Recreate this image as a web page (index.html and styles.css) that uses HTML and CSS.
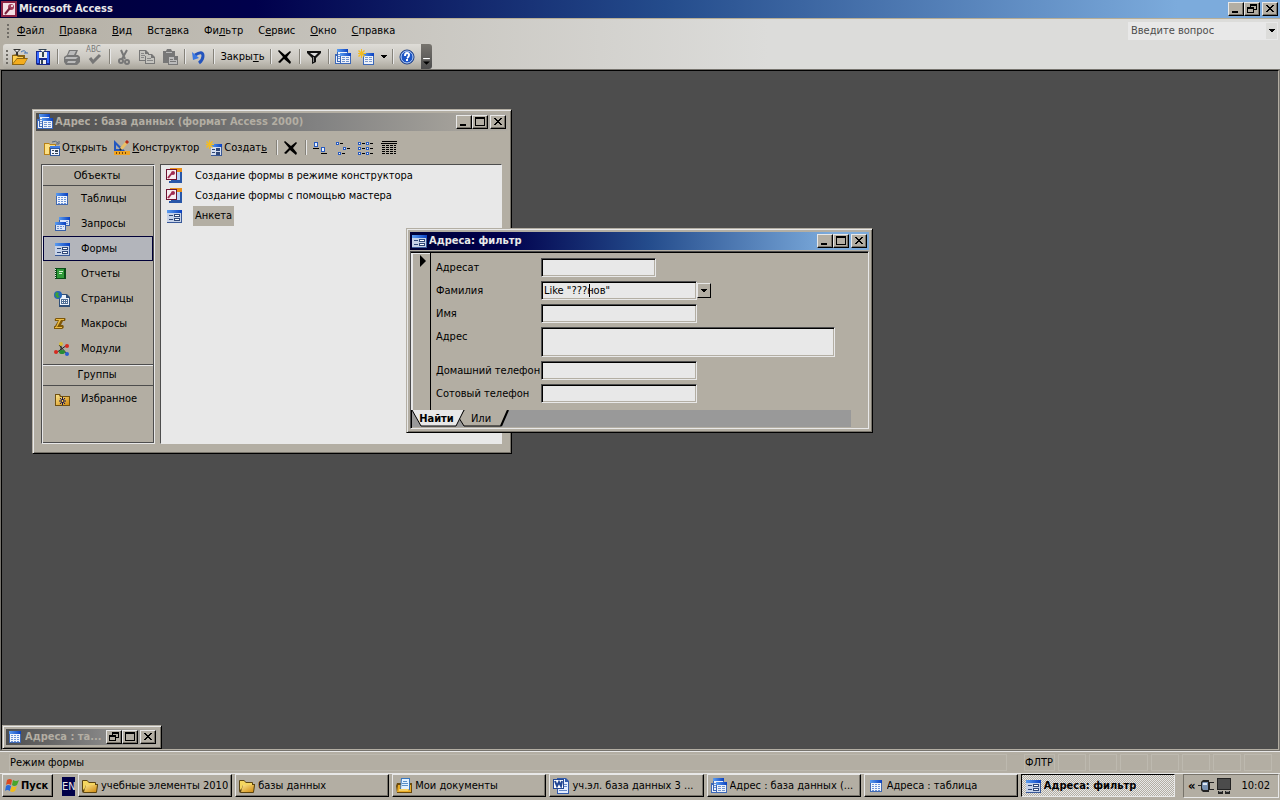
FILE: index.html
```html
<!DOCTYPE html>
<html lang="ru">
<head>
<meta charset="utf-8">
<title>Microsoft Access</title>
<link rel="stylesheet" href="styles.css">
</head>
<body>
<svg class="defs" aria-hidden="true">
  <defs>
    <linearGradient id="blue" x1="0" y1="0" x2="1" y2="0"><stop offset="0" stop-color="#5a9cf0"/><stop offset="1" stop-color="#0a40c0"/></linearGradient>
    <linearGradient id="gold" x1="0" y1="0" x2="1" y2="1"><stop offset="0" stop-color="#fbe48a"/><stop offset="1" stop-color="#d08a10"/></linearGradient>
    <symbol id="table" viewBox="0 0 16 16"><path fill="#4068b0" d="M2 2h12v12H2z"/><path fill="url(#blue)" d="M2 2h12v3H2z"/><path fill="#f0f4fc" d="M3 5h10v8H3z"/><path fill="#6c94d8" d="M4 6h2v1H4zm3 0h2v1H7zm3 0h2v1h-2zM4 8h2v1H4zm3 0h2v1H7zm3 0h2v1h-2zM4 10h2v1H4zm3 0h2v1H7zm3 0h2v1h-2zM4 12h2v1H4zm3 0h2v1H7zm3 0h2v1h-2z"/></symbol>
    <symbol id="form" viewBox="0 0 16 16"><path fill="#385898" d="M1 2h15v13H1z"/><path fill="url(#blue)" d="M1 2h15v3H1z"/><path fill="#c6d2e8" d="M1 5h14v9H1z"/><path fill="#304878" d="M3 7h4v1H3zm0 4h4v1H3zM8 6h6v3H8zm0 4h6v3H8z"/><path fill="#fff" d="M9 7h4v1H9zm0 4h4v1H9z"/></symbol>
    <symbol id="query" viewBox="0 0 16 16"><path fill="#3860a8" d="M5 1h11v9H5z"/><path fill="url(#blue)" d="M5 1h11v3H5z"/><path fill="#dce6f8" d="M6 4h9v5H6z"/><path fill="#7090c8" d="M12 5h2v1h-2zm0 2h2v1h-2z"/><path fill="#3860a8" d="M1 6h11v9H1z"/><path fill="url(#blue)" d="M1 6h11v3H1z"/><path fill="#dce6f8" d="M2 9h9v5H2z"/><path fill="#7090c8" d="M3 10h2v1H3zm3 0h2v1H6zm3 0h1v1H9zm-6 2h2v1H3zm3 0h2v1H6z"/></symbol>
    <symbol id="database" viewBox="0 0 16 16"><path fill="#3c68b8" d="M0 5h8v10H0z"/><path fill="#eef2fa" d="M1 7h6v7H1z"/><path fill="#3c68b8" d="M2 0h11v13H2z"/><path fill="url(#blue)" d="M2 0h11v3H2z"/><path fill="#eef2fa" d="M3 3h9v9H3z"/><path fill="#6f92ce" d="M3 5h2v1H3zm0 2h2v1H3zm0 2h2v1H3z"/><path fill="#3c68b8" d="M5 4h11v11H5z"/><path fill="url(#blue)" d="M5 4h11v3H5z"/><path fill="#eef2fa" d="M6 7h9v7H6z"/><path fill="#6f92ce" d="M7 8h3v1H7zm4 0h3v1h-3zm-4 2h3v1H7zm4 0h3v1h-3zm-4 2h3v1H7zm4 0h3v1h-3z"/></symbol>
    <symbol id="delete" viewBox="0 0 16 16"><path d="M2 1l6 5 5-4 1 1-4 5 4 5-1 2-6-5-4 4-2-1 5-5-5-6z"/></symbol>
    <symbol id="folder" viewBox="0 0 16 16"><path fill="#5c4510" d="M0 3q0-1 1-1h4l2 2h6q1 0 1 1v1h2v2l-1 6q0 1-1 1H2q-2 0-2-2z"/><path fill="#f5d660" d="M1 3h4l2 2h6v2H4L2 12 1 11z"/><path fill="url(#gold)" d="M4 7h11l-1 7H2z"/></symbol>
    <symbol id="openfilter" viewBox="0 0 16 16"><path fill="#8a6414" d="M0 6l5-1 2 1h6v3h3l-4 7H0z"/><path fill="#ffd050" d="M1 7h4l1 1h5v1H5l-4 5z"/><path fill="#f4ad1e" d="M5 10h10l-3 5H1z"/><path fill="#333" d="M1 0h8L6 3v4L4 6V3z"/><path fill="#eee" d="M3 1h4L5 3z"/><path fill="none" stroke="#4775b5" d="M9 3q4-3 5 1m-2 0h4"/></symbol>
    <symbol id="save" viewBox="0 0 16 16"><path fill="#172890" d="M1 2h14v14H2l-1-1z"/><path fill="#376aff" d="M2 3h2v11H2zm10 0h2v11h-2z"/><path fill="#eee" d="M4 3h8v6H4zm1 8h6v4H5z"/><path fill="#345" d="M6 11h2v4H6zM3 0h9L9 3v5H7V3z"/><path fill="#fff" d="M5 1h5L8 3z"/></symbol>
    <symbol id="print" viewBox="0 0 16 16"><path fill="#777" d="M5 1h9l-2 5h2l2 2v5l-3 3H2l-2-3V8l3-2z"/><path fill="#bbb" d="M6 2h6l-2 4H4zM2 8h12l-2 2H1zm2 4h8l-1 2H3z"/></symbol>
    <symbol id="check" viewBox="0 0 16 16"><path fill="none" stroke="#777" stroke-width="3" d="M3 9l3 4 7-7"/></symbol>
    <symbol id="cut" viewBox="0 0 16 16"><path fill="none" stroke="#777" stroke-width="2" d="M5 1l4 9M11 1L6 10"/><circle cx="5" cy="12" r="2" fill="none" stroke="#777" stroke-width="2"/><circle cx="11" cy="13" r="2" fill="none" stroke="#777" stroke-width="2"/></symbol>
    <symbol id="copy" viewBox="0 0 16 16"><path fill="#777" d="M0 1h7l3 3v8H0zm6 4h7l3 3v7H6z"/><path fill="#c5c4bf" d="M1 2h5v3h3v2H6v4H1zm6 4h5v3h3v5H7z"/><path stroke="#888" d="M2 4.500h3M2 6.500h4M2 8.500h3M8 9.500h4M8 11.500h6"/></symbol>
    <symbol id="paste" viewBox="0 0 16 16"><path fill="#777" d="M1 2h3l1-2h4l1 2h3v5h3v9H6v-2H1z"/><path fill="#bbb" d="M4 3h6v1H4zm3 5h5v3h3v4H7z"/><path stroke="#777" d="M8 10.500h3M8 12.500h6"/></symbol>
    <symbol id="undo" viewBox="0 0 16 16"><path fill="none" stroke="#2454bd" stroke-width="3" d="M4 6q8-5 8 1 0 4-4 7"/><path fill="#3977e2" d="M1 3l1 8 6-2z"/></symbol>
    <symbol id="filter" viewBox="0 0 16 16"><path fill="#111" d="M1 2h14v2l-5 5v4l-4 2V9L1 4z"/><path fill="#ddd" d="M4 4h8L9 7H8z"/><path fill="#888" d="M7 8h1v5H7z"/></symbol>
    <symbol id="newobject" viewBox="0 0 16 16"><path fill="#3c68b8" d="M5 4h11v12H5z"/><path fill="url(#blue)" d="M5 4h11v3H5z"/><path fill="#eef2fa" d="M6 7h9v8H6z"/><path fill="#7898d0" d="M7 8h3v1H7zm4 0h3v1h-3zm-4 2h3v1H7zm4 0h3v1h-3zm-4 2h3v1H7zm4 0h3v1h-3z"/><path fill="#f3bc21" d="M3 0h1v3l2-2 1 1-2 2h3v1H5l2 2-1 1-2-2v3H3V6L1 8 0 7l2-2H0V4h2L0 2l1-1 2 2z"/></symbol>
    <symbol id="newform" viewBox="0 0 16 16"><path fill="#385898" d="M5 4h11v12H5z"/><path fill="url(#blue)" d="M5 4h11v3H5z"/><path fill="#d4def0" d="M5 7h10v8H5z"/><path fill="#304878" d="M6 9h3v1H6zm0 3h3v1H6zm4-4h4v3h-4zm0 4h4v3h-4z"/><path fill="#f3bc21" d="M3 0h1v3l2-2 1 1-2 2h3v1H5l2 2-1 1-2-2v3H3V6L1 8 0 7l2-2H0V4h2L0 2l1-1 2 2z"/></symbol>
    <symbol id="help" viewBox="0 0 16 16"><circle cx="8" cy="8" r="7" fill="#1d55c5" stroke="#17377d"/><circle cx="8" cy="8" r="6" fill="none" stroke="#b9d0f6"/><path fill="none" stroke="#fff" stroke-width="2" d="M6 7q0-3 2-3t2 2-2 3m0 1v2"/></symbol>
    <symbol id="access" viewBox="0 0 16 16"><path fill="#8c2344" d="M0 0h16v16H0z"/><path fill="#f3dfe5" d="M2 2h12v12H2z"/><circle cx="10" cy="6" r="3" fill="#a33c5b"/><path stroke="#79203b" stroke-width="2" d="M9 7l-5 6"/><circle cx="11" cy="5" r="1" fill="#fff"/></symbol>
    <symbol id="wizard" viewBox="0 0 16 16"><path fill="#e8901c" d="M4 0h12v4H4z"/><path fill="#2856a8" d="M5 4h11v11H3v-2h2z"/><path fill="#b9d2f4" d="M11 4h3v8h-3z"/><path fill="#6e1432" d="M0 1h11v11H0z"/><path fill="#f7eef0" d="M1 2h9v9H1z"/><path stroke="#a02c50" stroke-width="2" d="M2 10l4-5"/><circle cx="7" cy="5" r="2" fill="#a02c50"/></symbol>
    <symbol id="openform" viewBox="0 0 16 16"><path fill="#b78117" d="M0 3h5l1 1h6v4H6v7H0z"/><path fill="#fce084" d="M1 4h4l1 1h5v2H5v7H1z"/><path fill="#315899" d="M6 6h10v10H6z"/><path fill="#3f7ce4" d="M6 6h10v2H6z"/><path fill="#eef3ff" d="M7 9h8v6H7z"/><path fill="#345" d="M8 10h2v1H8zm3 0h3v2h-3zm-3 3h2v1H8zm3 0h3v1h-3z"/><path fill="none" stroke="#56677f" d="M8 2q4-2 6 1m-2 1h3V1"/></symbol>
    <symbol id="design" viewBox="0 0 16 16"><path fill="#2458c0" d="M0 0l11 11H0z"/><path fill="#b3aea3" d="M2 5l4 4H2z"/><path fill="#f0a420" d="M0 11h16v4H0z"/><path stroke="#734708" d="M2.500 12v2m3-2v2m3-2v2m3-2v2"/><path stroke="#e9bf66" stroke-width="3" d="M7 9l6-7"/><path stroke="#b32b19" stroke-width="3" d="M12 3l2-2"/><path stroke="#222" stroke-width="2" d="M6 10l1-1"/></symbol>
    <symbol id="large" viewBox="0 0 16 16"><path fill="#285bc0" d="M2 2h4v5H2zm7 5h4v5H9z"/><path fill="#eaf2ff" d="M3 3h2v3H3zm7 5h2v3h-2z"/><path d="M1 8h6v1H1zm8 5h6v1H9z"/></symbol>
    <symbol id="small" viewBox="0 0 16 16"><path fill="#285bc0" d="M1 2h3v3H1zm7 5h3v3H8zm-5 5h3v3H3z"/><path fill="#fff" d="M2 3h1v1H2zm7 5h1v1H9zm-5 5h1v1H4z"/><path d="M5 3h3v1H5zm7 5h3v1h-3zm-5 5h3v1H7z"/></symbol>
    <symbol id="list" viewBox="0 0 16 16"><path fill="#285bc0" d="M0 2h3v3H0zm0 5h3v3H0zm0 5h3v3H0zm8-10h3v3H8zm0 5h3v3H8zm0 5h3v3H8z"/><path fill="#fff" d="M1 3h1v1H1zm0 5h1v1H1zm0 5h1v1H1zm8-10h1v1H9zm0 5h1v1H9zm0 5h1v1H9z"/><path d="M4 3h3v1H4zm0 5h3v1H4zm0 5h3v1H4zm8-10h3v1h-3zm0 5h3v1h-3zm0 5h3v1h-3z"/></symbol>
    <symbol id="details" viewBox="0 0 16 16"><path d="M1 1h15v1H1zM0 3h16v1H0zm1 2h3v1H1zm4 0h3v1H5zm4 0h3v1H9zm4 0h2v1h-2zM1 7h3v1H1zm4 0h3v1H5zm4 0h3v1H9zm4 0h2v1h-2zM1 9h3v1H1zm4 0h3v1H5zm4 0h3v1H9zm4 0h2v1h-2zM1 11h3v1H1zm4 0h3v1H5zm4 0h3v1H9zm4 0h2v1h-2zM1 13h3v1H1zm4 0h3v1H5zm4 0h3v1H9zm4 0h2v1h-2z"/></symbol>
    <symbol id="report" viewBox="0 0 16 16"><path fill="#0b4d18" d="M1 2h11v11H1z"/><path fill="#319c3a" d="M3 3h7v9H3z"/><path fill="#d8f0d4" d="M5 5h4v1H5zm0 2h3v1H5z"/><path stroke="#ddd" stroke-dasharray="1 1" d="M1.500 3v9"/></symbol>
    <symbol id="page" viewBox="0 0 16 16"><path fill="#315078" d="M5 3h8l3 3v10H5z"/><path fill="#edf3fb" d="M6 4h6v3h3v7H6z"/><path fill="#517096" d="M7 8h7v5H7z"/><path fill="#fff" d="M8 9h1v1H8zm2 0h1v1h-1zm2 0h1v1h-1zm-4 2h1v1H8zm2 0h1v1h-1zm2 0h1v1h-1z"/><circle cx="4" cy="4" r="4" fill="#2565b9"/><path fill="#3b9e38" d="M2 1l3 1-1 2 2 2-3 1-2-3z"/></symbol>
    <symbol id="macro" viewBox="0 0 16 16"><path fill="#7e5709" d="M2 2q-2 1-1 3h3l-3 5q-2 0-1 3h8q3-1 1-4H7l2-4h2q1-2 0-3z"/><path fill="#eebe45" d="M2 3h8v1H7l-4 7h5v1H1v-1h1l3-7H2z"/></symbol>
    <symbol id="module" viewBox="0 0 16 16"><path stroke="#222" fill="none" d="M2 12l11-8M5 4l9 10M7 2v8"/><circle cx="7" cy="3" r="2" fill="#d8bc37"/><circle cx="13" cy="5" r="2" fill="#d62b20"/><circle cx="2" cy="11" r="2" fill="#d62b20"/><ellipse cx="8" cy="11" rx="3" ry="2" fill="#278c34"/><circle cx="13" cy="13" r="2" fill="#2a5ed0"/></symbol>
    <symbol id="favorites" viewBox="0 0 16 16"><path fill="#715010" d="M1 3h5l1 2h9v10H1z"/><path fill="url(#gold)" d="M2 4h3l1 2h9v8H2z"/><path stroke="#15154f" d="M8.500 6v8M5 10h7M6 7l5 6m0-6l-5 6"/><path fill="#ffc83c" d="M8 9h1v2H8z"/></symbol>
    <symbol id="documents" viewBox="0 0 16 16"><path fill="#6b4a0c" d="M1 5h15v10H1L0 8z"/><path fill="#e9ac26" d="M2 7h13v7H1z"/><path fill="#3977bf" d="M5 0h9v12H4z"/><path fill="#e2f1ff" d="M6 1h7v10H5z"/><path stroke="#5990c9" d="M7 3.500h4M6 5.500h6M6 7.500h6"/><path fill="#f5cf65" d="M3 11h10l-1 2H3z"/></symbol>
    <symbol id="word" viewBox="0 0 16 16"><path fill="#315aac" d="M4 0h9l3 3v13H4z"/><path fill="#e4edff" d="M5 1h7v3h3v11H5z"/><path stroke="#678ac8" d="M10 6.500h4M10 8.500h4M6 12.500h8"/><path fill="#234794" d="M0 1h11v10H0z"/><path fill="#fff" d="M1 2h9v8H1z"/><path fill="none" stroke="#234794" stroke-width="2" d="M2 3l2 5 2-4 2 4 1-5"/></symbol>
    <symbol id="windows" viewBox="0 0 16 16"><path fill="#d9471f" d="M3 2q3-2 5 0L7 7Q4 5 2 7z"/><path fill="#48a52d" d="M9 2q3 2 6 0l-2 5q-3 2-5 0z"/><path fill="#2869d8" d="M2 8q2-2 5 0l-1 5q-3-2-5 0z"/><path fill="#efbb1c" d="M8 8q2 2 5 0l-2 5q-3 2-5 0z"/></symbol>
    <symbol id="plug" viewBox="0 0 16 16"><path fill="#222" d="M0 7h3V4l2-2h6v2h5v1h-4v6h4v1h-5v2H5l-2-2V8H0z"/><path fill="#7890b0" d="M5 4h5v8H5L4 10V5z"/><path fill="#dce5f1" d="M5 5h4v2H5z"/></symbol>
    <symbol id="network" viewBox="0 0 16 16"><path fill="#222" d="M1 0h14v12H1z"/><path fill="#4b4b4b" d="M2 1h12v10H2z"/><path fill="#222" d="M2 13h5v3H2zm7 0h5v3H9z"/><path fill="#888" d="M3 13h3v1H3zm7 0h3v1h-3z"/></symbol>
    <symbol id="min" viewBox="0 0 12 10"><path d="M2 7h6v2H2z"/></symbol>
    <symbol id="max" viewBox="0 0 12 10"><path fill-rule="evenodd" d="M1 0h10v9H1zm1 2v6h8V2z"/></symbol>
    <symbol id="restore" viewBox="0 0 12 10"><path fill-rule="evenodd" d="M4 0h7v6H8v3H1V3h3zm1 2v1h3v2h2V2zM2 5v3h5V5z"/></symbol>
    <symbol id="close" viewBox="0 0 12 10"><path d="M2 1h2v1h1v1h2V2h1V1h2v1H9v1H8v1H7v1h1v1h1v1h1v1H8V7H7V6H5v1H4v1H2V7h1V6h1V5h1V4H4V3H3V2H2z"/></symbol>
    <symbol id="down" viewBox="0 0 8 8"><path d="M1 2h6v1H6v1H5v1H3V4H2V3H1z"/></symbol>
  </defs>
</svg>
<div class="app">
  <header class="title-bar app-title">
    <svg class="icon"><use href="#access"/></svg>
    <h1 class="title-text">Microsoft Access</h1>
    <div class="caption-buttons">
      <button class="cap" aria-label="Свернуть"><svg><use href="#min"/></svg></button><button class="cap" aria-label="Восстановить"><svg><use href="#restore"/></svg></button><button class="cap cap-close" aria-label="Закрыть"><svg><use href="#close"/></svg></button>
    </div>
  </header>

  <div class="bars">
    <nav class="menu-bar">
      <span class="grip"></span>
      <button class="menu"><u>Ф</u>айл</button><button class="menu"><u>П</u>равка</button><button class="menu"><u>В</u>ид</button><button class="menu">Вст<u>а</u>вка</button><button class="menu">Фи<u>л</u>ьтр</button><button class="menu">С<u>е</u>рвис</button><button class="menu"><u>О</u>кно</button><button class="menu"><u>С</u>правка</button>
      <div class="ask"><input class="ask-input" type="text" aria-label="Введите вопрос" placeholder="Введите вопрос"><button class="ask-arrow" aria-label="Список вопросов"><svg><use href="#down"/></svg></button></div>
    </nav>
    <div class="tool-row">
      <div class="toolbar">
        <span class="grip"></span>
        <button class="tool" aria-label="Загрузить фильтр"><svg class="icon"><use href="#openfilter"/></svg></button>
        <button class="tool" aria-label="Сохранить"><svg class="icon"><use href="#save"/></svg></button>
        <span class="sep"></span>
        <button class="tool" aria-label="Печать"><svg class="icon"><use href="#print"/></svg></button>
        <button class="tool spell" aria-label="Орфография"><span class="spell-text">ABC</span><svg class="icon"><use href="#check"/></svg></button>
        <span class="sep"></span>
        <button class="tool" aria-label="Вырезать"><svg class="icon"><use href="#cut"/></svg></button>
        <button class="tool" aria-label="Копировать"><svg class="icon"><use href="#copy"/></svg></button>
        <button class="tool" aria-label="Вставить"><svg class="icon"><use href="#paste"/></svg></button>
        <span class="sep"></span>
        <button class="tool" aria-label="Отменить"><svg class="icon"><use href="#undo"/></svg></button>
        <span class="sep"></span>
        <button class="tool tool-text">Закры<u>т</u>ь</button>
        <span class="sep"></span>
        <button class="tool" aria-label="Удалить"><svg class="icon"><use href="#delete"/></svg></button>
        <span class="sep"></span>
        <button class="tool" aria-label="Применение фильтра"><svg class="icon"><use href="#filter"/></svg></button>
        <span class="sep"></span>
        <button class="tool" aria-label="Окно базы данных"><svg class="icon"><use href="#database"/></svg></button>
        <button class="tool" aria-label="Новый объект"><svg class="icon"><use href="#newobject"/></svg></button>
        <button class="tool tool-arrow" aria-label="Список объектов"><svg><use href="#down"/></svg></button>
        <span class="sep"></span>
        <button class="tool" aria-label="Справка"><svg class="icon"><use href="#help"/></svg></button>
      </div>
      <button class="overflow" aria-label="Параметры панелей"><svg viewBox="0 0 8 8"><path fill="#fff" d="M1 0h6v1H1z"/><path d="M1 3h6L4 6z"/></svg></button>
    </div>
  </div>

  <main class="workspace">
    <section class="window db-window">
      <header class="title-bar inactive">
        <svg class="icon"><use href="#database"/></svg>
        <h2 class="title-text">Адрес : база данных (формат Access 2000)</h2>
        <div class="caption-buttons">
          <button class="cap" aria-label="Свернуть"><svg><use href="#min"/></svg></button><button class="cap" aria-label="Развернуть"><svg><use href="#max"/></svg></button><button class="cap cap-close" aria-label="Закрыть"><svg><use href="#close"/></svg></button>
        </div>
      </header>
      <div class="db-tools">
        <button class="db-tool"><svg class="icon"><use href="#openform"/></svg><span>О<u>т</u>крыть</span></button>
        <button class="db-tool"><svg class="icon"><use href="#design"/></svg><span><u>К</u>онструктор</span></button>
        <button class="db-tool"><svg class="icon"><use href="#newform"/></svg><span>Создат<u>ь</u></span></button>
        <span class="sep"></span>
        <button class="tool" aria-label="Удалить"><svg class="icon"><use href="#delete"/></svg></button>
        <span class="sep"></span>
        <button class="tool" aria-label="Крупные значки"><svg class="icon"><use href="#large"/></svg></button>
        <button class="tool" aria-label="Мелкие значки"><svg class="icon"><use href="#small"/></svg></button>
        <button class="tool" aria-label="Список"><svg class="icon"><use href="#list"/></svg></button>
        <button class="tool" aria-label="Таблица"><svg class="icon"><use href="#details"/></svg></button>
      </div>
      <div class="db-body">
        <nav class="objects">
          <button class="group">Объекты</button>
          <button class="object"><svg class="icon"><use href="#table"/></svg>Таблицы</button>
          <button class="object"><svg class="icon"><use href="#query"/></svg>Запросы</button>
          <button class="object selected"><svg class="icon"><use href="#form"/></svg>Формы</button>
          <button class="object"><svg class="icon"><use href="#report"/></svg>Отчеты</button>
          <button class="object"><svg class="icon"><use href="#page"/></svg>Страницы</button>
          <button class="object"><svg class="icon"><use href="#macro"/></svg>Макросы</button>
          <button class="object"><svg class="icon"><use href="#module"/></svg>Модули</button>
          <button class="group group-lower">Группы</button>
          <button class="object"><svg class="icon"><use href="#favorites"/></svg>Избранное</button>
        </nav>
        <ul class="forms">
          <li class="form-item"><svg class="icon"><use href="#wizard"/></svg><span class="form-name">Создание формы в режиме конструктора</span></li>
          <li class="form-item"><svg class="icon"><use href="#wizard"/></svg><span class="form-name">Создание формы с помощью мастера</span></li>
          <li class="form-item"><svg class="icon"><use href="#form"/></svg><span class="form-name current">Анкета</span></li>
        </ul>
      </div>
    </section>

    <section class="window filter-window">
      <header class="title-bar">
        <svg class="icon"><use href="#form"/></svg>
        <h2 class="title-text">Адреса: фильтр</h2>
        <div class="caption-buttons">
          <button class="cap" aria-label="Свернуть"><svg><use href="#min"/></svg></button><button class="cap" aria-label="Развернуть"><svg><use href="#max"/></svg></button><button class="cap cap-close" aria-label="Закрыть"><svg><use href="#close"/></svg></button>
        </div>
      </header>
      <div class="client">
        <div class="record">
          <div class="selector"><svg class="marker" viewBox="0 0 6 12"><path d="M0 0l6 6-6 6z"/></svg></div>
          <form class="fields">
            <label for="f1">Адресат</label><input id="f1" class="field short" type="text">
            <label for="f2">Фамилия</label>
            <div class="combo"><input id="f2" class="field" type="text" value="Like &quot;???нов&quot;"><button type="button" class="combo-btn" aria-label="Список значений"><svg><use href="#down"/></svg></button><span class="caret"></span></div>
            <label for="f3">Имя</label><input id="f3" class="field" type="text">
            <label for="f4">Адрес</label><textarea id="f4" class="field long"></textarea>
            <label for="f5">Домашний телефон</label><input id="f5" class="field" type="text">
            <label for="f6">Сотовый телефон</label><input id="f6" class="field" type="text">
          </form>
        </div>
        <div class="tabs">
          <svg class="tab-shapes" viewBox="0 0 100 17" aria-hidden="true"><path fill="#b3aea3" stroke="#000" d="M52 0L47 8l5 8h37l7-16"/><path fill="#e8e8e8" stroke="#000" d="M0 0l9 16h35l8-16"/><path stroke="#000" stroke-width="2" d="M89 16l7-16"/></svg>
          <button class="tab active">Найти</button><button class="tab">Или</button>
        </div>
      </div>
    </section>

    <section class="window mini-window">
      <header class="title-bar inactive">
        <svg class="icon"><use href="#table"/></svg>
        <h2 class="title-text">Адреса : та...</h2>
        <div class="caption-buttons">
          <button class="cap" aria-label="Восстановить"><svg><use href="#restore"/></svg></button><button class="cap" aria-label="Развернуть"><svg><use href="#max"/></svg></button><button class="cap cap-close" aria-label="Закрыть"><svg><use href="#close"/></svg></button>
        </div>
      </header>
    </section>
  </main>

  <footer class="status">
    <span class="pane pane-main">Режим формы</span>
    <span class="pane pane-mode">ФЛТР</span><span class="pane"></span><span class="pane"></span><span class="pane"></span><span class="pane"></span><span class="pane"></span><span class="pane"></span><span class="pane"></span>
  </footer>

  <div class="taskbar">
    <button class="task start"><svg class="icon"><use href="#windows"/></svg>Пуск</button>
    <button class="lang">EN</button>
    <div class="tasks">
      <button class="task"><svg class="icon"><use href="#folder"/></svg><span class="task-name">учебные элементы 2010</span></button>
      <button class="task"><svg class="icon"><use href="#folder"/></svg><span class="task-name">базы данных</span></button>
      <button class="task"><svg class="icon"><use href="#documents"/></svg><span class="task-name">Мои документы</span></button>
      <button class="task"><svg class="icon"><use href="#word"/></svg><span class="task-name">уч.эл. база данных 3 ...</span></button>
      <button class="task"><svg class="icon"><use href="#database"/></svg><span class="task-name">Адрес : база данных (...</span></button>
      <button class="task"><svg class="icon"><use href="#table"/></svg><span class="task-name">Адреса : таблица</span></button>
      <button class="task pressed"><svg class="icon"><use href="#form"/></svg><span class="task-name">Адреса: фильтр</span></button>
    </div>
    <div class="tray"><b class="chevron">«</b><svg class="icon"><use href="#plug"/></svg><svg class="icon"><use href="#network"/></svg><time class="clock">10:02</time></div>
  </div>
</div>
</body>
</html>
```
FILE: styles.css
```css
* { box-sizing: border-box; }
:root {
  --face: #b3aea3;
  --light: #e8e8e8;
  --dark: #4d4d4d;
}
body {
  margin: 0;
  font: 11px/14px "DejaVu Sans Condensed", "DejaVu Sans", Tahoma, sans-serif;
  color: #000;
  background: var(--face);
}
button, input, textarea { font: inherit; color: inherit; margin: 0; padding: 0; border: 0; border-radius: 0; background: none; outline: 0; }
button { white-space: nowrap; }
h1, h2, ul { margin: 0; padding: 0; font-size: 11px; list-style: none; }
u { text-underline-offset: 1px; }
svg { display: block; flex: none; }
.defs { position: absolute; width: 0; height: 0; }
.icon { width: 16px; height: 16px; }
.app { display: flex; flex-direction: column; height: 100vh; overflow: hidden; }

.title-bar {
  display: flex;
  align-items: center;
  gap: 2px;
  height: 18px;
  padding: 0 2px 0 1px;
  color: var(--light);
  background: linear-gradient(90deg, #000038, #00004c 20%, #244c8c 52%, #7cabdc 92%);
}
.title-bar.inactive { color: #b3aea3; background: linear-gradient(90deg, #4d4d4d, #828282 60%, #b0aca3); }
.app-title { flex: none; }
.title-text { flex: 1; min-width: 0; font-weight: bold; white-space: nowrap; overflow: hidden; }
.caption-buttons { display: flex; }
.cap {
  width: 16px;
  height: 14px;
  padding: 1px;
  background: var(--face);
  border: 1px solid;
  border-color: var(--light) #000 #000 var(--light);
  box-shadow: inset -1px -1px #77736a;
}
.cap svg { width: 12px; height: 10px; }
.cap-close { margin-left: 2px; }

.bars { flex: none; border-top: 1px solid #b8ae96; background: linear-gradient(90deg, #b3aea3, #dcdcda 60%); }
.menu-bar { display: flex; align-items: center; height: 24px; padding-left: 7px; }
.grip { width: 3px; height: 14px; border-left: 2px dotted #6f6c66; }
.menu { padding: 3px 8px 3px 7px; }
.ask { display: flex; width: 150px; height: 18px; margin-left: auto; margin-right: 2px; background: var(--light); }
.ask-input { flex: 1; min-width: 0; padding: 0 3px; }
.ask-input::placeholder { color: var(--dark); opacity: 1; }
.ask-arrow { width: 13px; background: #dcdcda; border: 1px solid var(--light); }
.ask-arrow svg, .tool-arrow svg, .combo-btn svg { width: 8px; height: 8px; margin: auto; }
.tool-row { display: flex; height: 27px; padding: 1px 0 1px 3px; }
.toolbar {
  display: flex;
  align-items: center;
  width: 418px;
  padding-left: 3px;
  border-radius: 3px 0 0 3px;
  background: linear-gradient(#dedcd7, #c9c6bf 60%, #aaa69c);
}
.tool { width: 23px; height: 22px; padding: 0 4px 0 3px; flex: none; }
.toolbar .tool-text { width: 51px; padding: 0 3px; }
.toolbar .tool-arrow { width: 12px; padding: 0; }
.sep { flex: none; width: 2px; height: 15px; margin: 0 2px; border-left: 1px solid #85827a; border-right: 1px solid var(--light); }
.spell { position: relative; }
.spell-text { position: absolute; top: 0; left: 2px; font-size: 8px; line-height: 8px; color: #777; }
.overflow { width: 11px; padding: 14px 1px 2px; border-radius: 0 3px 3px 0; background: linear-gradient(#77746e, #4d4d4d); }

.workspace {
  position: relative;
  flex: 1;
  min-height: 0;
  overflow: hidden;
  background: var(--dark);
  border: 1px solid #000;
  border-right-color: var(--face);
  border-bottom-color: var(--face);
  outline: 1px solid #77746e;
  margin: 0 1px;
}
.window {
  position: absolute;
  padding: 3px;
  background: var(--face);
  border: 1px solid;
  border-color: var(--face) #000 #000 var(--face);
  box-shadow: inset 1px 1px var(--light), inset -1px -1px #77736a;
}
.db-window { left: 30px; top: 38px; width: 480px; }
.filter-window { left: 404px; top: 157px; width: 467px; }
.mini-window { left: 0; bottom: 0; width: 160px; }
.mini-window .title-bar { height: 16px; }

.db-tools { display: flex; align-items: center; height: 33px; padding-left: 8px; }
.db-tool { display: flex; align-items: center; gap: 2px; height: 22px; margin-right: 7px; }
.db-body { display: flex; gap: 5px; padding: 0 6px 6px 5px; }
.objects, .forms { height: 280px; border: 1px solid; border-color: var(--dark) var(--light) var(--light) var(--dark); }
.objects { display: flex; flex-direction: column; width: 114px; box-shadow: inset 1px 1px var(--light), inset -1px -1px var(--dark); padding: 1px; }
.group { height: 20px; padding-right: 2px; border-bottom: 1px solid var(--dark); }
.group-lower { margin-top: 3px; height: 22px; border-top: 1px solid var(--dark); box-shadow: inset 0 1px var(--light); }
.object { display: flex; align-items: center; gap: 11px; height: 25px; padding-left: 11px; }
.object.selected { border: 1px solid #000038; background: #b3b5bb; padding-left: 10px; }
.forms { flex: 1; padding: 1px 5px; background: var(--light); }
.form-item { display: flex; align-items: center; gap: 11px; height: 20px; }
.form-name { padding: 3px 2px; }
.current { background: var(--face); }

.client { margin-top: 1px; border: 1px solid; border-color: var(--dark) var(--light) var(--light) var(--dark); padding-bottom: 1px; box-shadow: inset 1px 1px #000; }
.record { display: flex; }
.selector { flex: none; width: 20px; padding: 2px 0 0 9px; margin-top: 1px; border-right: 1px solid #000; box-shadow: inset 2px 1px var(--light); }
.marker { width: 6px; height: 12px; }
.fields { display: grid; grid-template-columns: 105px 1fr; row-gap: 4px; padding: 6px 0 7px 5px; align-items: start; }
.fields label { padding-top: 3px; white-space: nowrap; }
.field {
  display: block;
  width: 156px;
  height: 19px;
  padding: 0 2px;
  background: var(--light);
  border: 1px solid;
  border-color: var(--dark) var(--light) var(--light) var(--dark);
  box-shadow: inset 1px 1px #000, inset -1px -1px var(--face);
}
.short { width: 115px; }
.long { width: 294px; height: 30px; resize: none; overflow: hidden; }
.combo { position: relative; display: flex; }
.combo-btn { align-self: center; width: 14px; height: 15px; background: var(--face); border: 1px solid; border-color: var(--light) #000 #000 var(--light); }
.caret { position: absolute; left: 48px; top: 3px; width: 1px; height: 13px; background: #000; }
.tabs { position: relative; display: flex; width: 439px; height: 17px; margin-left: 1px; background: #999; }
.tab-shapes { position: absolute; left: 0; top: 0; width: 100px; height: 17px; }
.tab { position: relative; width: 40px; }
.tab.active { width: 49px; font-weight: bold; }

.status { flex: none; display: flex; gap: 3px; height: 23px; margin-top: 1px; padding: 2px 8px 2px 9px; border-top: 1px solid var(--light); border-bottom: 1px solid var(--light); }
.pane { width: 28px; border: 1px solid #bdb9af; line-height: 16px; }
.pane-main { flex: 1; margin-right: 14px; }
.pane-mode { width: 31px; white-space: nowrap; }

.taskbar { flex: none; display: flex; height: 26px; padding: 0 1px 2px 2px; }
.tasks { flex: 1; min-width: 0; display: flex; gap: 3px; margin-right: 8px; }
.task {
  flex: 1;
  min-width: 0;
  display: flex;
  align-items: center;
  gap: 3px;
  height: 23px;
  padding: 0 3px;
  background: var(--face);
  border: 1px solid;
  border-color: var(--light) #000 #000 var(--light);
  box-shadow: inset -1px -1px #77736a;
}
.task-name { overflow: hidden; }
.start { flex: none; width: 51px; gap: 1px; padding: 0 1px; font-weight: bold; }
.lang { width: 13px; height: 19px; margin: 3px 3px 0 9px; overflow: hidden; color: var(--light); background: #000048; }
.pressed { font-weight: bold; border-color: #000 var(--light) var(--light) #000; box-shadow: none; background: repeating-conic-gradient(#e8e8e8 0 25%, #b3aea3 0 50%) 0 0 / 2px 2px; }
.tray { display: flex; align-items: center; gap: 2px; width: 96px; height: 24px; padding: 0 8px 0 4px; border: 1px solid; border-color: #77736a var(--light) var(--light) #77736a; }
.chevron { font-size: 13px; }
.clock { margin-left: auto; }
```
